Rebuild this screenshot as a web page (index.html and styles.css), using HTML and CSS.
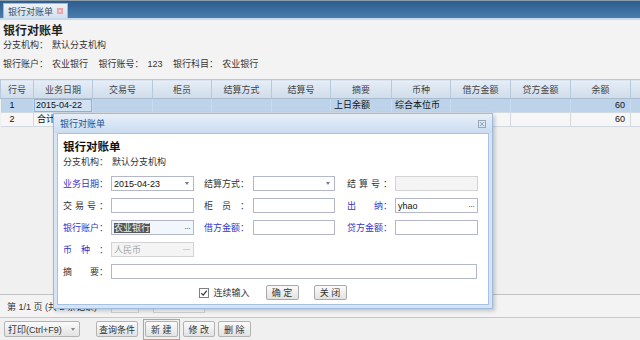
FILE: index.html
```html
<!DOCTYPE html>
<html lang="zh-CN">
<head>
    <meta charset="UTF-8">
    <meta name="viewport" content="width=device-width, initial-scale=1.0">
    <title>银行对账单</title>
    <link rel="stylesheet" href="styles.css">
</head>
<body>
<div class="app">
    <div class="topbar">
        <div class="tab">银行对账单<span class="tab-close">×</span></div>
    </div>

    <div class="head">
        <h1 class="head-title">银行对账单</h1>
        <div class="head-line"><span class="key">分支机构：</span><span class="val">默认分支机构</span></div>
        <div class="head-line accounts">
            <span class="key">银行账户：</span><span class="val">农业银行</span>
            <span class="key">银行账号：</span><span class="val">123</span>
            <span class="key">银行科目：</span><span class="val">农业银行</span>
        </div>
    </div>

    <!-- 对账明细 -->
    <div class="grid">
        <table class="grid-table">
            <colgroup>
                <col class="w33"><col class="w59"><col class="w60"><col class="w59"><col class="w60"><col class="w59">
                <col class="w61"><col class="w59"><col class="w60"><col class="w60"><col class="w60"><col class="w10">
            </colgroup>
            <thead>
                <tr>
                    <th>行号</th><th>业务日期</th><th>交易号</th><th>柜员</th><th>结算方式</th><th>结算号</th>
                    <th>摘要</th><th>币种</th><th>借方金额</th><th>贷方金额</th><th>余额</th><th></th>
                </tr>
            </thead>
            <tbody>
                <tr class="sel">
                    <td class="no">1</td><td class="edit">2015-04-22</td><td></td><td></td><td></td><td></td>
                    <td>上日余额</td><td>综合本位币</td><td></td><td></td><td class="num">60</td><td></td>
                </tr>
                <tr class="sum">
                    <td class="no">2</td><td>合计</td><td></td><td></td><td></td><td></td>
                    <td></td><td></td><td></td><td></td><td class="num">60</td><td></td>
                </tr>
            </tbody>
        </table>
    </div>

    <div class="pager">
        <span>第 1/1 页 (共 2 条记录)</span>
        <span class="pager-box"></span>
        <span class="pager-box wide"></span>
    </div>

    <div class="toolbar">
        <button class="btn split">打印(Ctrl+F9)<i class="split-arrow"></i></button>
        <button class="btn tight">查询条件</button>
        <span class="mark"><button class="btn">新 建</button></span>
        <button class="btn">修 改</button>
        <button class="btn">删 除</button>
    </div>
</div>

<!-- 新建对账单窗口 -->
<div class="dialog">
    <div class="dialog-header">
        <span class="dialog-title">银行对账单</span>
        <svg class="dialog-close" width="8" height="8" viewBox="0 0 8 8">
            <rect x="0.5" y="0.5" width="7" height="7" fill="none" stroke="#9aa6b4"/>
            <path d="M2 2 L6 6 M6 2 L2 6" stroke="#9aa6b4" stroke-width="1"/>
        </svg>
    </div>
    <div class="dialog-body">
        <h2 class="form-title">银行对账单</h2>
        <div class="form-sub"><span class="key">分支机构：</span>默认分支机构</div>

        <div class="form-grid">
            <label class="f-label req"><span class="jt">业务日期：</span></label>
            <div class="field"><span class="text">2015-04-23</span><i class="arrow"></i></div>
            <label class="f-label c2"><span class="jt">结算方式：</span></label>
            <div class="field"><span class="text"></span><i class="arrow"></i></div>
            <label class="f-label c3"><span class="jt">结算号：</span></label>
            <div class="field disabled"></div>

            <label class="f-label"><span class="jt">交易号：</span></label>
            <div class="field"></div>
            <label class="f-label c2"><span class="jt">柜员：</span></label>
            <div class="field"></div>
            <label class="f-label c3 req"><span class="jt short">出纳</span>：</label>
            <div class="field"><span class="text">yhao</span><i class="dots">···</i></div>

            <label class="f-label req"><span class="jt">银行账户：</span></label>
            <div class="field focus"><span class="text"><span class="selected">农业银行</span></span><i class="dots">···</i></div>
            <label class="f-label c2 req"><span class="jt">借方金额：</span></label>
            <div class="field"></div>
            <label class="f-label c3 req"><span class="jt">贷方金额：</span></label>
            <div class="field"></div>

            <label class="f-label req"><span class="jt">币种：</span></label>
            <div class="field disabled"><span class="text">人民币</span><i class="dash"></i></div>
            <div class="span4"></div>

            <label class="f-label"><span class="jt short">摘要</span>：</label>
            <div class="field wide"></div>
        </div>

        <div class="form-actions">
            <label class="check">
                <svg width="10" height="10" viewBox="0 0 10 10">
                    <rect x="0.5" y="0.5" width="9" height="9" fill="#fff" stroke="#808080"/>
                    <path d="M2.2 5.2 L4.2 7.2 L7.8 2.6" fill="none" stroke="#333" stroke-width="1.2"/>
                </svg>
                <span>连续输入</span>
            </label>
            <button class="btn dlg-btn">确 定</button>
            <button class="btn dlg-btn">关 闭</button>
        </div>
    </div>
</div>
</body>
</html>
```

FILE: styles.css
```css
body {
    margin: 0;
    font-family: "Liberation Sans", "Noto Sans CJK SC", sans-serif;
    font-size: 9px;
    color: #333;
    background: #f3f3f3;
}
.app {
    width: 640px;
    height: 340px;
    display: flex;
    flex-direction: column;
    overflow: hidden;
}

/* top tab bar */
.topbar {
    flex: none;
    height: 20px;
    box-sizing: border-box;
    display: flex;
    align-items: flex-end;
    padding-left: 3px;
    background: linear-gradient(#2e5d8f, #4a7cae);
    border-top: 1px solid #8c9cab;
    border-bottom: 2px solid #c7d9ec;
}
.tab {
    height: 15px;
    box-sizing: border-box;
    display: flex;
    align-items: center;
    padding: 0 4px;
    white-space: nowrap;
    color: #3d4b5c;
    background: linear-gradient(#eef3f9, #d3e0ee);
    border: 1px solid #9fb9d6;
    border-bottom: none;
}
.tab-close {
    width: 6px;
    height: 6px;
    margin-left: 4px;
    background: #eaa4a4;
    color: #fff;
    font-size: 6px;
    line-height: 6px;
    text-align: center;
}

/* page header */
.head {
    flex: none;
    padding: 0 3px 9px;
}
.head-title {
    margin: 3px 0 0;
    font-size: 12px;
    line-height: 16px;
    color: #222;
}
.head-line {
    line-height: 12px;
    color: #333;
}
.head-line.accounts {
    margin-top: 7px;
}
.key {
    margin-right: 4px;
}
.val {
    margin-right: 8px;
}

/* grid */
.grid {
    flex: 1;
    min-height: 0;
    background: #f0f0f0;
    overflow: hidden;
}
.grid-table {
    width: 640px;
    table-layout: fixed;
    border-collapse: collapse;
}
.w33 { width: 33px; }
.w59 { width: 59px; }
.w60 { width: 60px; }
.w61 { width: 61px; }
.w10 { width: 10px; }
.grid-table th {
    height: 18px;
    padding: 0;
    font-weight: normal;
    color: #444;
    background: linear-gradient(#e6eef7, #cfdcea);
    border: 1px solid #b8c9db;
    border-bottom-color: #aabcd0;
}
.grid-table td {
    height: 13px;
    padding: 0 3px;
    line-height: 13px;
    color: #111;
    white-space: nowrap;
    overflow: hidden;
    border-right: 1px solid #d2d9e1;
    border-bottom: 1px solid #d2d9e1;
}
.grid-table td.no {
    padding-left: 9px;
}
.grid-table td.num {
    text-align: right;
    padding-right: 5px;
}
.grid-table tr.sel td {
    background: #bcd3ea;
    border-right-color: #c9dbee;
}
.grid-table tr.sel td.edit {
    background: #d0e2f4;
    box-shadow: inset 0 0 0 1px #8fb2d8;
    padding-left: 2px;
}
.grid-table tr.sum td {
    background: #f6f6f6;
}

/* pager */
.pager {
    flex: none;
    height: 22px;
    display: flex;
    align-items: center;
    padding-left: 7px;
    border-top: 1px solid #c3c3c3;
    border-bottom: 1px solid #c8c8c8;
    color: #333;
}
.pager-box {
    width: 26px;
    height: 11px;
    margin-left: 14px;
    border: 1px solid #d4d4d4;
    background: #f8f8f8;
}
.pager-box.wide {
    width: 50px;
}

/* bottom toolbar */
.toolbar {
    flex: none;
    height: 22px;
    display: flex;
    align-items: center;
    padding-left: 4px;
    background: #f0f0f0;
}
.btn {
    height: 16px;
    padding: 0 5px;
    font-family: inherit;
    font-size: 9px;
    color: #333;
    background: linear-gradient(#fbfbfb, #e2e2e2);
    border: 1px solid #b3b3b3;
    border-radius: 2px;
    margin-right: 3px;
}
.btn.split {
    width: 76px;
    display: flex;
    align-items: center;
    justify-content: space-between;
    padding: 0 4px 0 3px;
    margin-right: 16px;
}
.split-arrow {
    width: 0;
    height: 0;
    border-left: 2.5px solid transparent;
    border-right: 2.5px solid transparent;
    border-top: 3px solid #888;
}
.btn.tight {
    padding: 0 2px;
    margin-right: 5px;
}
.mark {
    display: flex;
    align-items: center;
    height: 21px;
    padding: 0 1px;
    margin-right: 3px;
    border: 1px solid #ec8a8a;
    box-sizing: border-box;
}
.mark .btn {
    margin-right: 0;
}

/* dialog */
.dialog {
    position: absolute;
    left: 53px;
    top: 113px;
    width: 440px;
    height: 196px;
    box-sizing: border-box;
    display: flex;
    flex-direction: column;
    padding: 0 3px 3px;
    background: #d6e4f4;
    border: 1px solid #9dbbe0;
    box-shadow: 2px 2px 4px rgba(0, 0, 0, 0.2);
}
.dialog-header {
    height: 19px;
    display: flex;
    align-items: center;
    justify-content: space-between;
    margin: 0 -3px;
    padding: 0 6px;
    background: linear-gradient(#e7eff9, #cbdcf0);
}
.dialog-title {
    color: #1d4f95;
}
.dialog-body {
    flex: 1;
    padding: 5px 5px 0;
    background: #fff;
    border: 1px solid #a7c2e2;
}
.form-title {
    margin: 0;
    font-size: 11.5px;
    line-height: 16px;
    color: #111;
}
.form-sub {
    line-height: 14px;
}
.form-grid {
    display: grid;
    grid-template-columns: 48px 83px 59px 82px 60px 83px;
    grid-auto-rows: 15px;
    row-gap: 7px;
    margin-top: 7px;
}
.f-label {
    display: flex;
    align-items: center;
    color: #333;
}
.f-label.req {
    color: #3434c9;
}
.f-label.c2 {
    padding-left: 10px;
}
.f-label.c3 {
    padding-left: 12px;
}
.jt {
    display: inline-block;
    width: 45px;
    text-align: justify;
    text-align-last: justify;
}
.jt.short {
    width: 36px;
}
.field {
    display: flex;
    align-items: center;
    box-sizing: border-box;
    padding: 0 2px;
    border: 1px solid #b3b7c6;
    background: #fff;
    color: #111;
}
.field.disabled {
    background: #f4f4f4;
    border-color: #d3d3d3;
    color: #a8a8a8;
}
.field.focus {
    background: #f1f7fd;
}
.field.wide {
    grid-column: 2 / 7;
    margin-right: 1px;
}
.span4 {
    grid-column: 3 / 7;
}
.text {
    flex: 1;
    white-space: nowrap;
}
.selected {
    background: #555;
    color: #eee;
}
.arrow {
    width: 0;
    height: 0;
    margin-right: 2px;
    border-left: 2.5px solid transparent;
    border-right: 2.5px solid transparent;
    border-top: 3px solid #7a7a7a;
}
.dots {
    font-style: normal;
    color: #666;
    margin-right: 1px;
    letter-spacing: -1px;
}
.dash {
    width: 7px;
    height: 1px;
    margin-right: 1px;
    background: #d0d0d0;
}
.form-actions {
    display: flex;
    justify-content: center;
    align-items: center;
    margin-top: 6px;
}
.check {
    display: flex;
    align-items: center;
    margin-right: 16px;
}
.check span {
    margin-left: 4px;
}
.dlg-btn {
    height: 15px;
    width: 33px;
    padding: 0;
    margin-right: 15px;
    border-color: #a9a9a9;
}
.dlg-btn:last-child {
    margin-right: 0;
}
```
